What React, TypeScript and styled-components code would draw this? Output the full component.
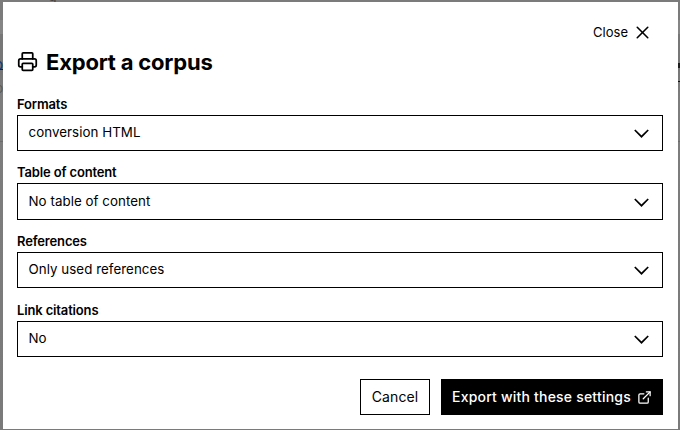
import React from 'react';
import styled, { createGlobalStyle } from 'styled-components';
import { ExternalLink, Printer, X } from 'lucide-react';

const GlobalStyle = createGlobalStyle`
  *, *::before, *::after { box-sizing: border-box; }
  body { margin: 0; font-family: Inter, sans-serif; color: #000; }
`;

const Backdrop = styled.div`
  position: relative;
  width: 680px;
  height: 430px;
  padding: 2px 2px 1px 3px;
  overflow: hidden;
  background: linear-gradient(#7b7b7b 0 20px, #858585 20px 34px, #777 34px 70px, #7d7d7d 100px, #7a7a7a 100%);
`;

const PageText = styled.span<{ $x: number; $y: number; $color?: string; $size?: number }>`
  position: absolute;
  left: ${p => p.$x}px;
  top: ${p => p.$y}px;
  color: ${p => p.$color ?? '#444'};
  font-size: ${p => p.$size ?? 14}px;
  line-height: 16px;
`;

const PageRule = styled.i<{ $x: number; $y: number; $color?: string; $height?: number }>`
  position: absolute;
  left: ${p => p.$x}px;
  top: ${p => p.$y}px;
  width: 3px;
  height: ${p => p.$height ?? 1}px;
  background: ${p => p.$color ?? '#6c6c6c'};
`;

const Dialog = styled.section`
  position: relative;
  height: 427px;
  padding: 20px 15px 14px 14px;
  display: flex;
  flex-direction: column;
  background: #fff;
`;

const CloseButton = styled.button`
  align-self: flex-end;
  display: flex;
  align-items: center;
  gap: 4px;
  height: 20px;
  margin-right: 10px;
  padding: 0;
  border: 0;
  background: none;
  font: 400 13px/20px Inter, sans-serif;
  color: #000;
`;

const Title = styled.h1`
  display: flex;
  align-items: center;
  gap: 8px;
  height: 28px;
  margin: 6px 0 19px;
  font-size: 22px;
  font-weight: 700;
  line-height: 28px;
  letter-spacing: -0.2px;

  svg { margin-bottom: 2px; }
`;

const Fields = styled.div`
  display: grid;
  gap: 12px;
`;

const Field = styled.div`
  display: flex;
  flex-direction: column;
`;

const Label = styled.label<{ $spaced?: boolean }>`
  height: ${p => (p.$spaced ? 21 : 20)}px;
  padding-top: ${p => (p.$spaced ? 2 : 1)}px;
  font-size: 13px;
  font-weight: 600;
  line-height: 16px;
  letter-spacing: -0.15px;
`;

const Select = styled.div<{ $tall?: boolean }>`
  display: flex;
  align-items: center;
  justify-content: space-between;
  height: ${p => (p.$tall ? 37 : 36)}px;
  padding: 0 13px 2px 10.5px;
  border: 1px solid #000;
  font-size: 13.33px;
  line-height: 18px;
  letter-spacing: 0.05px;
`;

const Chevron = styled.svg`
  width: 15px;
  height: 9px;
  margin-top: 3px;
`;

const Actions = styled.footer`
  display: flex;
  justify-content: flex-end;
  gap: 11px;
  margin-top: auto;
`;

const Button = styled.button<{ $primary?: boolean }>`
  display: flex;
  align-items: center;
  justify-content: center;
  gap: 6px;
  width: ${p => (p.$primary ? 222 : 70)}px;
  height: 36px;
  padding: 0;
  border: 1px solid #000;
  background: ${p => (p.$primary ? '#000' : '#fff')};
  color: ${p => (p.$primary ? '#fff' : '#000')};
  font: ${p => (p.$primary ? 500 : 400)} 14px/20px Inter, sans-serif;
  letter-spacing: ${p => (p.$primary ? 0.2 : 0.1)}px;
`;

const fields = [
  { label: 'Formats', value: 'conversion HTML' },
  { label: 'Table of content', value: 'No table of content', tall: true },
  { label: 'References', value: 'Only used references' },
  { label: 'Link citations', value: 'No', spaced: true },
];

export default function App() {
  return (
    <>
      <GlobalStyle />
      <Backdrop>
        <PageText $x={48} $y={-12}>g</PageText>
        <PageText $x={-6.5} $y={56} $color="#103f78" $size={16}>b</PageText>
        <PageRule $x={0} $y={69} $color="#222" />
        <PageText $x={-5} $y={80} $color="#5c5c5c">o</PageText>
        <PageRule $x={0} $y={141} />
        <PageRule $x={678} $y={63} $height={5} $color="#1c1c1c" />
        <PageRule $x={678} $y={81} $color="#111" />
        <PageRule $x={678} $y={141} />
        <Dialog role="dialog" aria-labelledby="export-title">
          <CloseButton type="button">
            Close
            <X size={21} strokeWidth={1.8} />
          </CloseButton>
          <Title id="export-title">
            <Printer size={21} strokeWidth={2} />
            Export a corpus
          </Title>
          <Fields>
            {fields.map(f => (
              <Field key={f.label}>
                <Label $spaced={f.spaced}>{f.label}</Label>
                <Select role="combobox" aria-label={f.label} $tall={f.tall}>
                  {f.value}
                  <Chevron viewBox="0 0 15 9" fill="none" stroke="#000" strokeWidth="1.7">
                    <path d="M.8 1 7.5 7.7 14.2 1" />
                  </Chevron>
                </Select>
              </Field>
            ))}
          </Fields>
          <Actions>
            <Button type="button">Cancel</Button>
            <Button type="button" $primary>
              Export with these settings
              <ExternalLink size={15} strokeWidth={2} />
            </Button>
          </Actions>
        </Dialog>
      </Backdrop>
    </>
  );
}
